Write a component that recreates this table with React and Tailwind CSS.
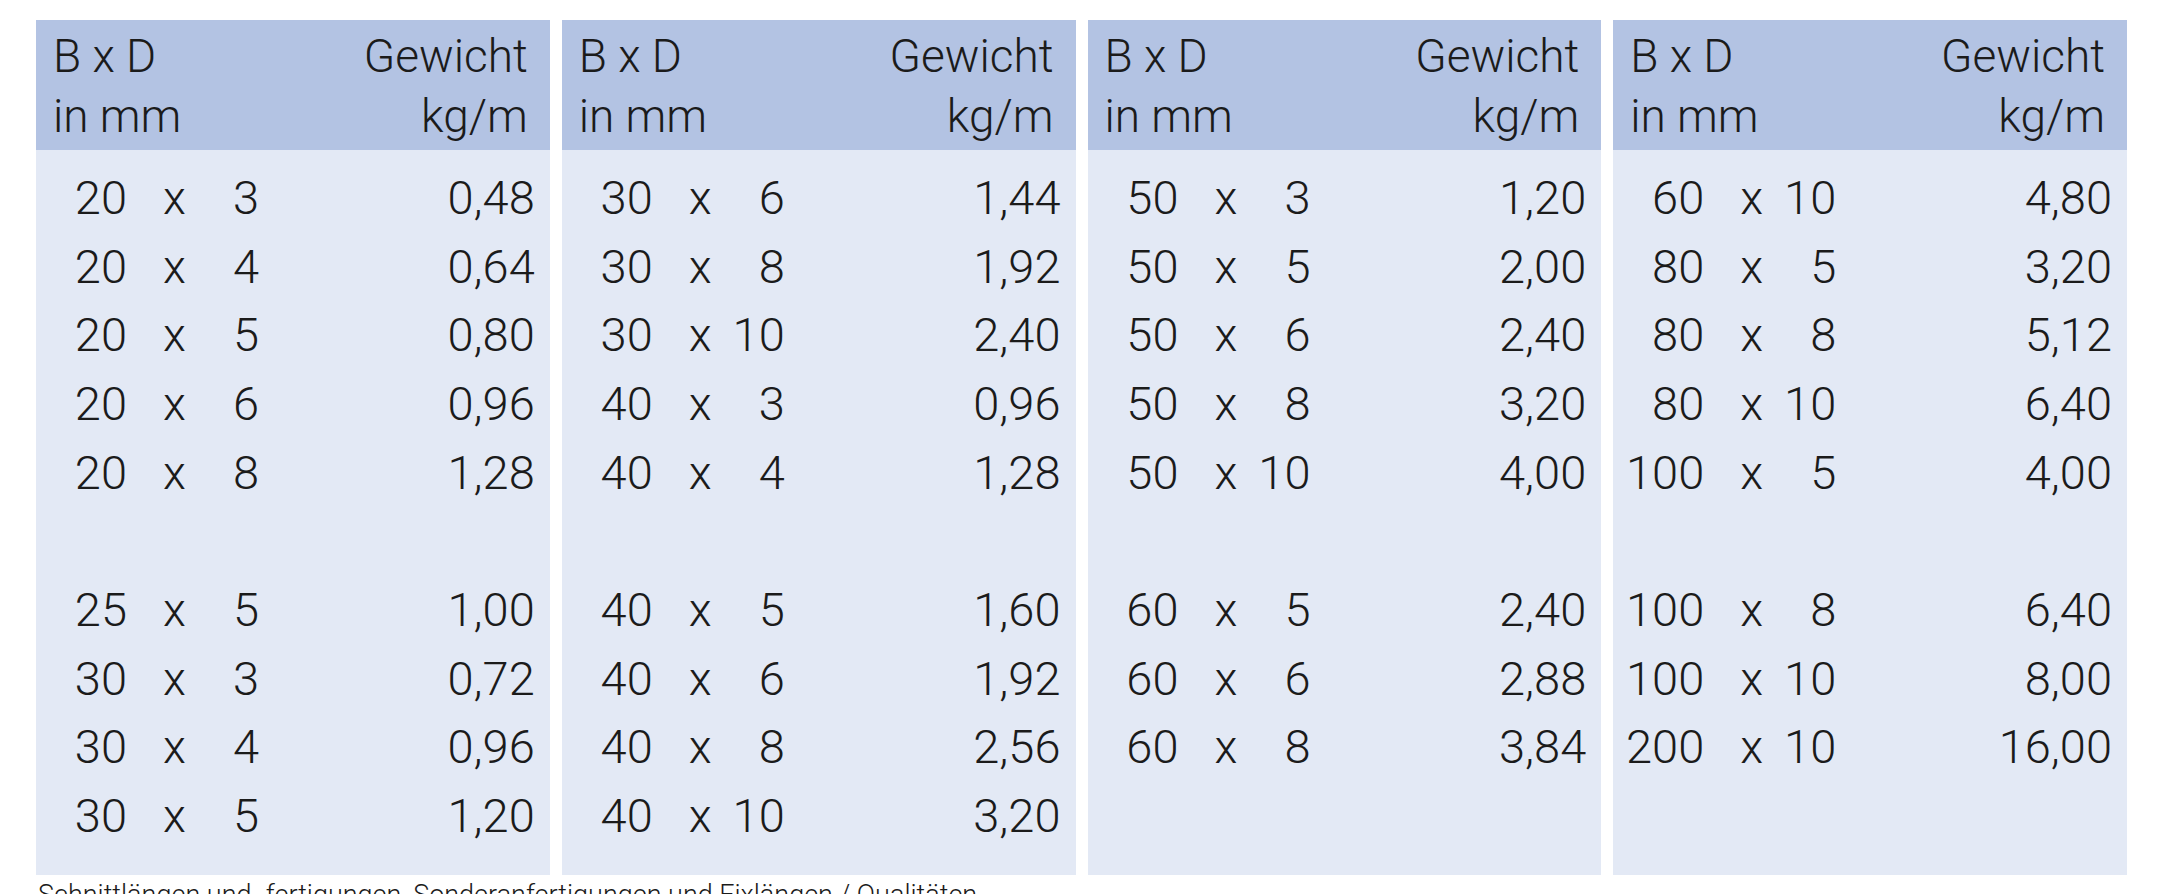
import React from "react";

const panels = [
  [
    ["20", "3", "0,48"],
    ["20", "4", "0,64"],
    ["20", "5", "0,80"],
    ["20", "6", "0,96"],
    ["20", "8", "1,28"],
    null,
    ["25", "5", "1,00"],
    ["30", "3", "0,72"],
    ["30", "4", "0,96"],
    ["30", "5", "1,20"],
  ],
  [
    ["30", "6", "1,44"],
    ["30", "8", "1,92"],
    ["30", "10", "2,40"],
    ["40", "3", "0,96"],
    ["40", "4", "1,28"],
    null,
    ["40", "5", "1,60"],
    ["40", "6", "1,92"],
    ["40", "8", "2,56"],
    ["40", "10", "3,20"],
  ],
  [
    ["50", "3", "1,20"],
    ["50", "5", "2,00"],
    ["50", "6", "2,40"],
    ["50", "8", "3,20"],
    ["50", "10", "4,00"],
    null,
    ["60", "5", "2,40"],
    ["60", "6", "2,88"],
    ["60", "8", "3,84"],
  ],
  [
    ["60", "10", "4,80"],
    ["80", "5", "3,20"],
    ["80", "8", "5,12"],
    ["80", "10", "6,40"],
    ["100", "5", "4,00"],
    null,
    ["100", "8", "6,40"],
    ["100", "10", "8,00"],
    ["200", "10", "16,00"],
  ],
];

function Panel({ rows }) {
  return (
    <div className="flex flex-col">
      <div className="h-[130px] bg-[#b3c3e3] pl-[17px] pr-[22px] pt-[6px] text-[46px] leading-[60px] font-light">
        <div className="flex justify-between">
          <span>B x D</span>
          <span>Gewicht</span>
        </div>
        <div className="flex justify-between">
          <span>in mm</span>
          <span>kg/m</span>
        </div>
      </div>
      <div className="h-[725px] bg-[#e3e9f5] pt-[14px] text-[47px] font-light">
        {rows.map((r, i) =>
          r ? (
            <div key={i} className="flex h-[68.67px] leading-[68.67px]">
              <div className="w-[91px] text-right">{r[0]}</div>
              <div className="ml-[20px] w-[55px] text-center">x</div>
              <div className="w-[57px] text-right">{r[1]}</div>
              <div className="flex-1 pr-[15px] text-right">{r[2]}</div>
            </div>
          ) : (
            <div key={i} className="h-[68.67px]" />
          )
        )}
      </div>
    </div>
  );
}

export default function App() {
  return (
    <div
      className="min-h-screen bg-white pl-[36px] pt-[20px] text-[#1b1b1b]"
      style={{ fontFamily: "Roboto, 'Liberation Sans', sans-serif" }}
    >
      <div className="grid w-[2091px] grid-cols-4 gap-[12px]">
        {panels.map((p, i) => (
          <Panel key={i} rows={p} />
        ))}
      </div>
      <div className="mt-[6px] pl-[2px] text-[27px] leading-[28px] font-light">
        Schnittlängen und -fertigungen, Sonderanfertigungen und Fixlängen / Qualitäten
      </div>
    </div>
  );
}
